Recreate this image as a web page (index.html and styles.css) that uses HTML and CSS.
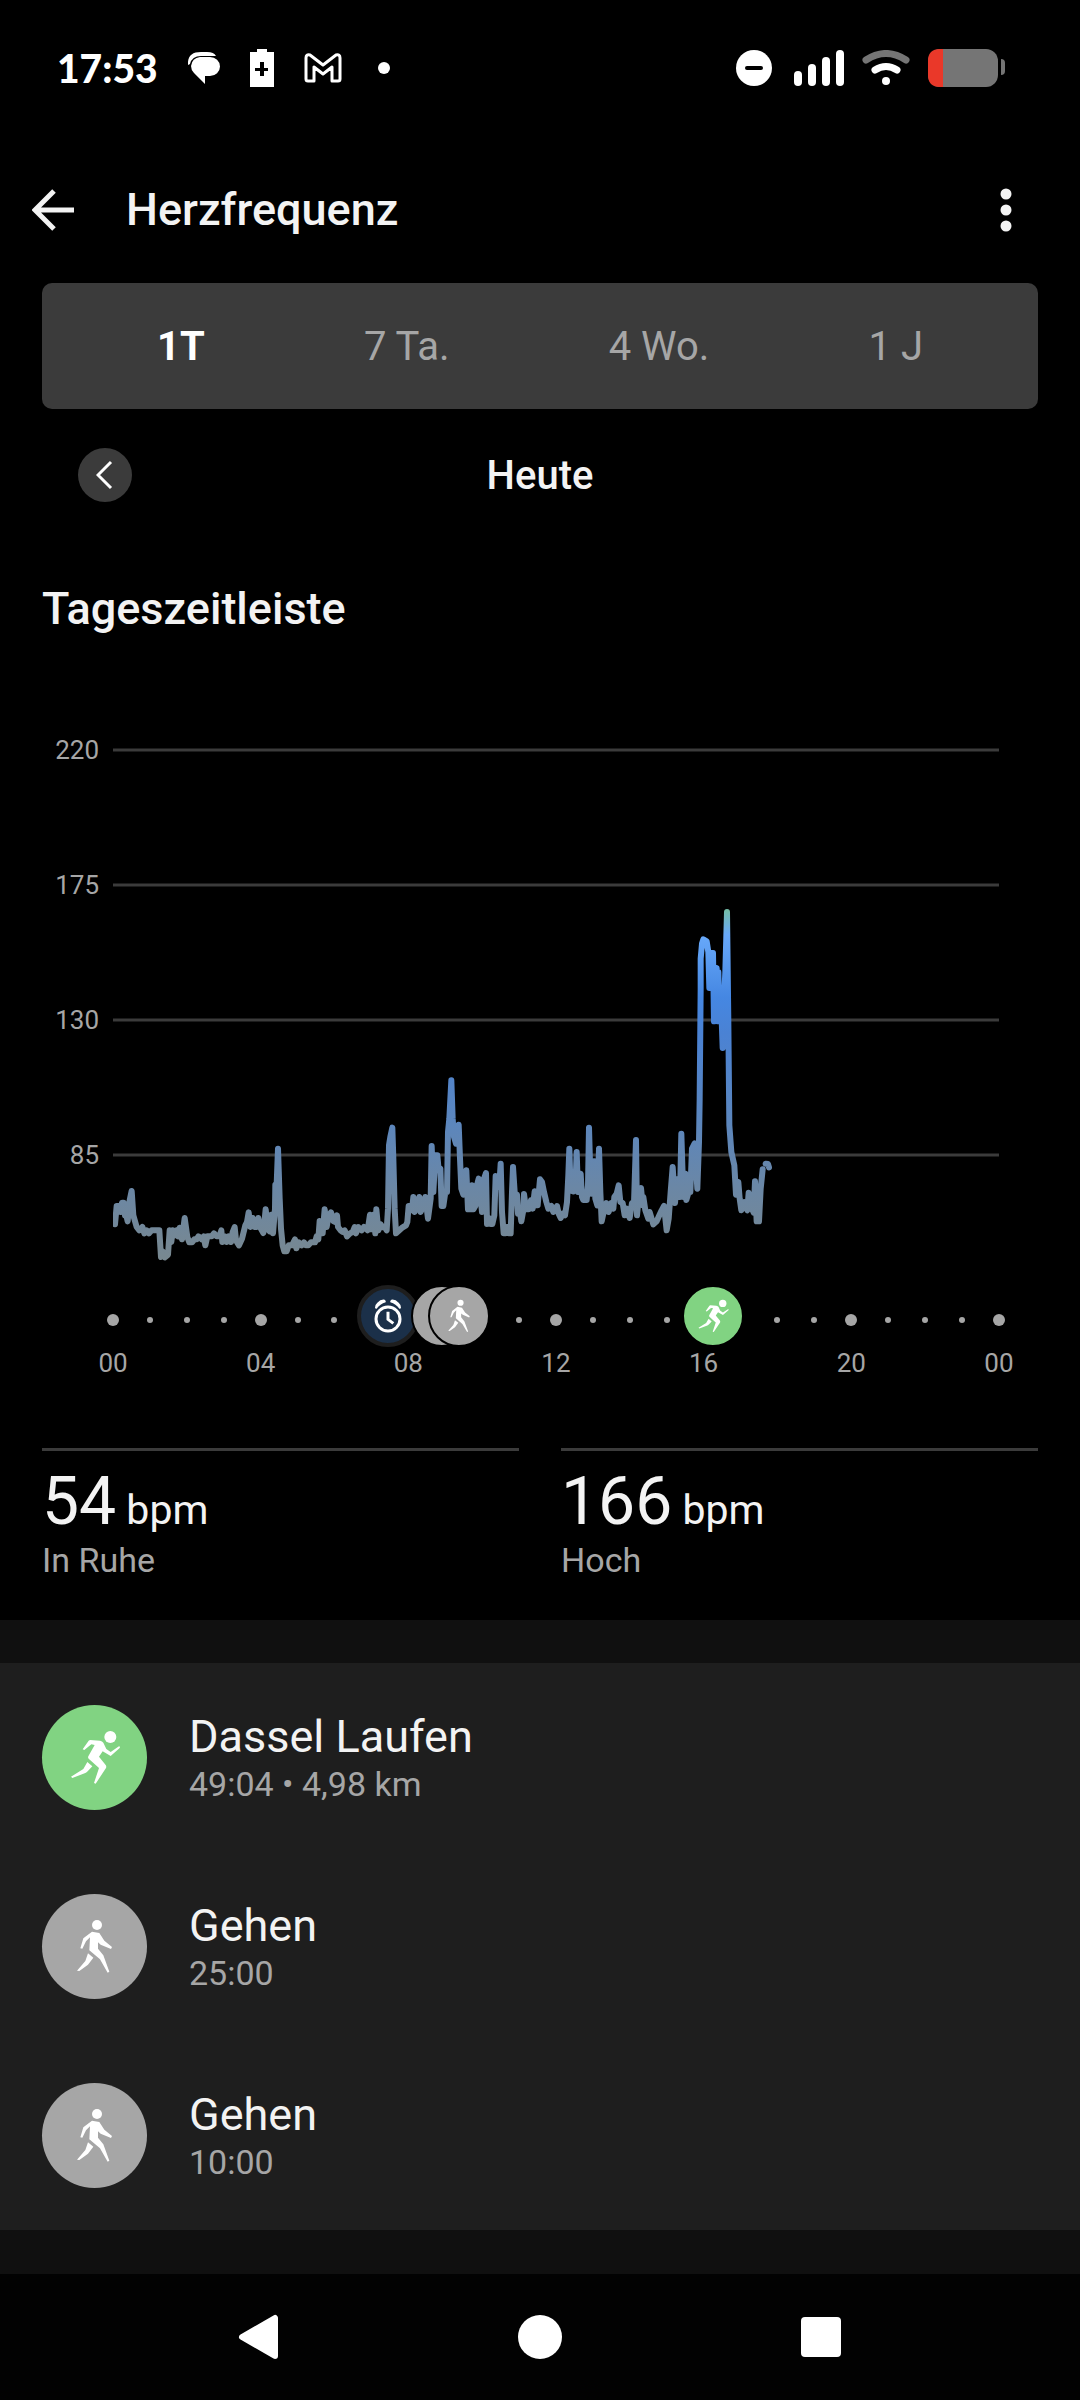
FILE: index.html
```html
<!DOCTYPE html>
<html lang="de">
  <head>
    <meta charset="utf-8">
    <meta name="viewport" content="width=device-width, initial-scale=1.0">

    <title>Herzfrequenz</title>

    <link rel="stylesheet" href="styles.css">
  </head>

  <body>
    <!-- Shared activity icons -->
    <svg class="hidden" aria-hidden="true">
      <symbol id="run" viewBox="60 60 195 195">
        <circle cx="205" cy="96" r="18"/>
        <path d="M144 105L174 107Q181 108 184 113L193 132L206 141L232 123L234 128L206 153L182 139L171 155L191 180Q194 184 192 189L161 236L156 234L171 189L140 161Q137 157 139 154L158 120L148 118L127 135L122 133L140 107Z"/>
        <path d="M136 171L151 184L137 199Q134 202 130 204L91 219L87 215L124 192Z"/>
      </symbol>
      <symbol id="walk" viewBox="60 60 195 195">
        <circle cx="165" cy="93" r="15"/>
        <path d="M150 113L172 117L187 140L210 159L207 165L176 152L168 145L168 164L184 184L202 233L197 236L174 196L142 169L144 130L132 142L121 164L115 163L124 133Z"/>
        <path d="M138 178L154 191L138 212L112 231L105 230L130 201Z"/>
      </symbol>
    </svg>

    <!-- Status bar -->
    <div class="status-bar">
      <div class="status-left">
        <span class="clock">17:53</span>
        <svg class="icon-chat" viewBox="0 0 32 32" aria-hidden="true">
          <path d="M0 13Q-1 0 13 0H19Q26 0 28 4H13Q4 4 2 12Z"/>
          <path d="M12 5H22A10 9.500 0 0 1 22 24H17V32L6 21Q3 18 3 14Q4 6 12 5Z"/>
        </svg>
        <svg class="icon-charge" viewBox="0 0 24 38" aria-hidden="true">
          <path fill-rule="evenodd" d="M7 0H17V3H24V38H0V3H7ZM10 13V19H5V22H10V27H14V22H18V19H14V13Z"/>
        </svg>
        <svg class="icon-mail" viewBox="0 0 38 30" aria-hidden="true">
          <path d="M2 5Q2 1 6 2L19 12L32 2Q36 1 36 5V26Q36 28 34 28H28V14L19 21L10 14V28H4Q2 28 2 26Z"/>
        </svg>
        <span class="dot"></span>
      </div>
      <div class="status-right">
        <svg class="icon-dnd" viewBox="0 0 36 36" aria-hidden="true">
          <circle cx="18" cy="18" r="18"/>
          <path d="M11 18H25"/>
        </svg>
        <svg class="icon-signal" viewBox="0 0 50 36" aria-hidden="true">
          <rect x="0" y="21" width="8" height="15" rx="4"/>
          <rect x="14" y="14" width="8" height="22" rx="4"/>
          <rect x="28" y="7" width="8" height="29" rx="4"/>
          <rect x="42" y="0" width="8" height="36" rx="4"/>
        </svg>
        <svg class="icon-wifi" viewBox="0 0 48 36" aria-hidden="true">
          <path class="weak" d="M4 10Q24 -3 44 10"/>
          <path d="M13 20Q24 13 35 20"/>
          <circle cx="24" cy="31" r="4"/>
        </svg>
        <svg class="icon-battery" viewBox="0 0 78 38" aria-hidden="true">
          <rect class="shell" width="70" height="38" rx="12"/>
          <path class="level" d="M15 0V38H12Q0 38 0 26V12Q0 0 12 0Z"/>
          <path class="shell" d="M73 10Q77 10 77 14V22Q77 26 73 26Z"/>
        </svg>
      </div>
    </div>

    <!-- App bar -->
    <header class="app-bar">
      <button aria-label="Zurück">
        <svg class="icon-back" viewBox="0 0 42 42"><path d="M42 21H4M22 2L3 21L22 40"/></svg>
      </button>
      <h1>Herzfrequenz</h1>
      <button aria-label="Mehr">
        <svg class="icon-more" viewBox="0 0 12 44">
          <circle cx="6" cy="6" r="5.500"/>
          <circle cx="6" cy="22" r="5.500"/>
          <circle cx="6" cy="38" r="5.500"/>
        </svg>
      </button>
    </header>

    <main>
      <nav class="tabs">
        <button class="active">1T</button>
        <button>7 Ta.</button>
        <button>4 Wo.</button>
        <button>1 J</button>
      </nav>

      <div class="date-nav">
        <button class="prev" aria-label="Vorheriger Tag">
          <svg viewBox="0 0 18 30"><path d="M15 2L2 15L15 28"/></svg>
        </button>
        <span class="date">Heute</span>
      </div>

      <h2>Tageszeitleiste</h2>

      <!-- Heart rate chart, 9 units per bpm on the y axis -->
      <div class="chart">
        <div class="y-labels">
          <span>220</span>
          <span>175</span>
          <span>130</span>
          <span>85</span>
        </div>
        <svg class="plot" viewBox="39 -971 2658 1590" preserveAspectRatio="none" role="img" aria-label="Herzfrequenz heute">
          <defs>
            <linearGradient id="rate" gradientUnits="userSpaceOnUse" x1="0" y1="-445" x2="0" y2="600">
              <stop offset="0" stop-color="#74bda8"/>
              <stop offset="0.070" stop-color="#68a9fa"/>
              <stop offset="0.250" stop-color="#4587e2"/>
              <stop offset="0.350" stop-color="#4a82d4"/>
              <stop offset="0.600" stop-color="#5b86be"/>
              <stop offset="0.800" stop-color="#6b87a5"/>
              <stop offset="1" stop-color="#788890"/>
            </linearGradient>
          </defs>
          <path class="grid" d="M39 -926H2697M39 -521H2697M39 -116H2697M39 289H2697"/>
          <polyline class="rate" points="45,497 50,442 58,442 62,460 66,432 71,432 75,470 79,470 83,488 89,425 95,397 100,470 110,505 118,515 127,505 133,524 140,515 147,524 155,515 178,515 183,595 188,578 195,596 204,588 209,515 214,550 218,515 225,530 230,515 235,533 239,507 246,542 254,478 262,535 268,551 276,551 283,542 290,542 295,533 305,542 311,533 316,560 322,533 335,533 342,524 350,533 358,533 364,515 367,550 374,533 380,550 386,533 393,550 398,520 404,505 408,545 417,560 426,540 436,500 441,490 446,461 451,505 458,478 463,505 470,505 475,478 480,505 490,523 497,452 504,512 509,518 514,468 519,524 525,450 526,378 530,378 534,270 539,420 543,510 548,560 553,578 560,578 566,560 576,560 585,542 589,569 596,551 605,560 612,551 618,560 625,560 633,551 645,551 650,533 655,542 659,487 664,524 668,524 674,452 680,505 686,470 693,461 700,487 706,490 711,470 714,505 722,515 728,520 734,515 741,533 750,524 758,520 764,505 768,524 775,505 785,515 792,505 803,515 810,468 815,512 820,468 826,524 829,452 835,515 841,496 848,506 855,506 860,515 864,450 867,260 871,235 877,207 880,300 884,450 888,524 898,515 908,506 918,500 922,490 926,442 934,442 936,455 940,415 944,460 952,440 958,415 962,460 970,440 976,415 984,480 992,420 995,262 1000,400 1006,290 1012,290 1016,335 1021,330 1025,442 1030,442 1036,400 1041,400 1044,220 1048,180 1054,65 1058,180 1062,235 1068,255 1072,240 1076,198 1080,300 1084,390 1090,408 1094,380 1099,335 1104,452 1111,452 1116,380 1120,452 1126,442 1131,380 1136,360 1140,400 1146,460 1152,360 1158,343 1161,496 1167,478 1172,496 1177,496 1183,470 1187,352 1193,385 1198,380 1202,315 1206,460 1211,524 1217,524 1221,505 1226,524 1232,524 1236,400 1239,325 1244,400 1246,425 1251,408 1254,465 1260,460 1264,488 1270,455 1272,406 1278,452 1286,452 1293,425 1298,450 1304,398 1308,440 1313,440 1320,362 1326,370 1332,400 1339,430 1345,450 1354,442 1360,460 1366,455 1371,442 1376,465 1382,478 1388,465 1395,470 1401,430 1405,350 1408,270 1412,395 1420,398 1426,390 1430,280 1434,400 1442,345 1446,415 1450,424 1460,424 1464,380 1467,207 1471,350 1474,405 1482,308 1486,420 1492,440 1497,270 1501,400 1505,488 1512,455 1519,433 1526,460 1534,433 1540,450 1543,415 1550,405 1556,380 1561,430 1568,433 1574,470 1580,450 1589,478 1596,433 1602,433 1608,244 1611,470 1618,400 1623,388 1628,440 1630,415 1636,455 1645,480 1649,460 1660,497 1670,488 1678,470 1685,455 1692,442 1700,515 1706,480 1712,400 1718,325 1725,433 1731,362 1736,415 1740,415 1744,225 1750,415 1756,345 1759,424 1766,400 1771,400 1776,270 1784,254 1792,390 1797,250 1799,120 1802,-210 1802,-300 1806,-345 1810,-358 1820,-352 1825,-320 1828,-212 1834,-317 1836,-212 1839,-317 1842,-112 1846,-260 1850,-272 1852,-112 1855,-260 1859,-112 1863,-175 1868,-32 1872,-175 1876,-260 1881,-440 1885,-110 1888,200 1894,280 1903,320 1908,408 1915,370 1919,420 1924,455 1933,430 1942,455 1946,402 1952,440 1961,462 1965,368 1970,488 1977,488 1982,390 1988,332"/>
          <polyline class="rate" points="1997,315 2004,316 2007,326"/>
        </svg>
      </div>

      <!-- Hours of the day with activities on top -->
      <div class="timeline">
        <div class="dots">
          <i></i><i></i><i></i><i></i><i></i><i></i><i></i><i></i><i></i><i></i><i></i><i></i><i></i>
          <i></i><i></i><i></i><i></i><i></i><i></i><i></i><i></i><i></i><i></i><i></i><i></i>
        </div>
        <div class="marker alarm" style="left: 31%">
          <svg viewBox="0 0 84 102" aria-hidden="true">
            <circle cx="42" cy="60" r="36"/>
            <path d="M42 38V61L58 73"/>
            <path class="bell" d="M3 26Q2 18 10 11Q20 0 32 2Q37 5 35 10Q18 15 8 29Q4 30 3 26ZM81 26Q82 18 74 11Q64 0 52 2Q47 5 49 10Q66 15 76 29Q80 30 81 26Z"/>
          </svg>
        </div>
        <div class="marker" style="left: 37.1%"></div>
        <div class="marker" style="left: 39%"><svg><use href="#walk"/></svg></div>
        <div class="marker green" style="left: 67.7%"><svg><use href="#run"/></svg></div>
      </div>
      <div class="hours">
        <span>00</span>
        <span>04</span>
        <span>08</span>
        <span>12</span>
        <span>16</span>
        <span>20</span>
        <span>00</span>
      </div>

      <div class="stats">
        <div class="stat">
          <div class="value">54<small> bpm</small></div>
          <div class="label">In Ruhe</div>
        </div>
        <div class="stat">
          <div class="value">166<small> bpm</small></div>
          <div class="label">Hoch</div>
        </div>
      </div>
    </main>

    <!-- Activities of the day -->
    <ul class="activities">
      <li>
        <div class="badge green"><svg><use href="#run"/></svg></div>
        <div>
          <div class="name">Dassel Laufen</div>
          <div class="label">49:04 • 4,98 km</div>
        </div>
      </li>
      <li>
        <div class="badge"><svg><use href="#walk"/></svg></div>
        <div>
          <div class="name">Gehen</div>
          <div class="label">25:00</div>
        </div>
      </li>
      <li>
        <div class="badge"><svg><use href="#walk"/></svg></div>
        <div>
          <div class="name">Gehen</div>
          <div class="label">10:00</div>
        </div>
      </li>
    </ul>

    <!-- System navigation -->
    <footer class="nav-bar">
      <button aria-label="Zurück">
        <svg viewBox="0 0 46 46"><path d="M6 23L39 4V42Z"/></svg>
      </button>
      <button aria-label="Startseite">
        <svg viewBox="0 0 46 46"><circle cx="23" cy="23" r="22"/></svg>
      </button>
      <button aria-label="Übersicht">
        <svg viewBox="0 0 46 46"><rect x="3" y="3" width="40" height="40" rx="4"/></svg>
      </button>
    </footer>
  </body>
</html>
```

FILE: styles.css
```css
/* Basic reset and body styling */
* {
  box-sizing: border-box;
}
body {
  margin: 0;
  font-family: Roboto, "Liberation Sans", sans-serif;
  background: #000;
  color: #f3f3f3;
  min-height: 100vh;
  display: flex;
  flex-direction: column;
}
button {
  background: none;
  border: none;
  padding: 0;
  color: inherit;
  font: inherit;
  cursor: pointer;
}
svg {
  display: block;
  flex: none;
}
.hidden {
  display: none;
}

/* Status bar */
.status-bar {
  display: flex;
  justify-content: space-between;
  align-items: center;
  height: 136px;
  padding: 0 74px 0 57px;
  color: #fff;
}
.status-bar svg {
  fill: #fff;
}
.status-left,
.status-right {
  display: flex;
  align-items: center;
}
.status-left {
  gap: 30px;
}
.status-right {
  gap: 18px;
}
.clock {
  font-family: Lato, Roboto, sans-serif;
  font-size: 39px;
  font-weight: 900;
  line-height: 48px;
}
.icon-chat {
  width: 32px;
  height: 32px;
}
.icon-charge {
  width: 24px;
  height: 38px;
}
.status-bar .icon-mail {
  width: 38px;
  height: 30px;
  fill: none;
  stroke: #fff;
  stroke-width: 3;
  stroke-linejoin: round;
}
.dot {
  width: 12px;
  height: 12px;
  margin-left: 6px;
  border-radius: 50%;
  background: #fff;
}
.icon-dnd {
  width: 36px;
  height: 36px;
  margin-right: 4px;
}
.icon-dnd path {
  stroke: #000;
  stroke-width: 4;
  stroke-linecap: round;
}
.icon-signal {
  width: 50px;
  height: 36px;
}
.icon-wifi {
  width: 48px;
  height: 36px;
}
.icon-wifi path {
  fill: none;
  stroke: #fff;
  stroke-width: 7;
  stroke-linecap: round;
}
.icon-wifi .weak {
  stroke: #757575;
}
.icon-battery {
  width: 78px;
  height: 38px;
}
.icon-battery .shell {
  fill: #757575;
}
.icon-battery .level {
  fill: #ea3829;
}

/* App bar */
.app-bar {
  display: flex;
  align-items: center;
  height: 147px;
  padding: 0 68px 0 32px;
}
h1,
h2 {
  margin: 0;
  font-size: 45px;
  font-weight: 500;
  line-height: 54px;
}
h1 {
  flex: 1;
  margin-left: 52px;
}
.icon-back {
  width: 42px;
  height: 42px;
  fill: none;
  stroke: #f3f3f3;
  stroke-width: 5;
}
.icon-more {
  width: 12px;
  height: 44px;
  fill: #f3f3f3;
}

main {
  padding: 0 42px;
}

/* Period tabs */
.tabs {
  display: flex;
  justify-content: space-between;
  height: 126px;
  padding: 0 115px;
  border-radius: 10px;
  background: #3b3b3b;
}
.tabs button {
  font-size: 40px;
  color: #a6a6a6;
}
.tabs .active {
  color: #fff;
  font-weight: 700;
}

/* Date row */
.date-nav {
  display: grid;
  grid-template-columns: 54px 1fr 54px;
  align-items: center;
  height: 132px;
  padding: 0 36px;
}
.prev {
  width: 54px;
  height: 54px;
  border-radius: 50%;
  background: #3b3b3b;
  display: grid;
  place-items: center;
}
.prev svg {
  width: 18px;
  height: 30px;
  fill: none;
  stroke: #fff;
  stroke-width: 3;
}
.date {
  text-align: center;
  font-size: 40px;
  font-weight: 500;
}
h2 {
  margin-top: 41px;
}

/* Chart */
.chart {
  display: flex;
  gap: 14px;
  margin-top: 99px;
  padding-right: 39px;
}
.y-labels {
  width: 57px;
  display: flex;
  flex-direction: column;
  gap: 105px;
  text-align: right;
}
.y-labels,
.hours {
  font-size: 26px;
  line-height: 30px;
  color: #a6a6a6;
}
.plot {
  flex: 1;
  min-width: 0;
  height: 530px;
}
.plot path,
.plot polyline {
  fill: none;
  vector-effect: non-scaling-stroke;
}
.plot .grid {
  stroke: #3b3b3b;
  stroke-width: 3;
}
.plot .rate {
  stroke: url(#rate);
  stroke-width: 6;
  stroke-linecap: round;
  stroke-linejoin: round;
}

/* Timeline */
.timeline {
  position: relative;
  height: 60px;
  margin: 20px 39px 0 71px;
}
.dots {
  display: flex;
  justify-content: space-between;
  align-items: center;
  height: 70px;
  margin: 0 -6px;
}
.dots i {
  width: 12px;
  display: grid;
  place-items: center;
}
.dots i::before {
  content: "";
  width: 6px;
  height: 6px;
  border-radius: 50%;
  background: #a6a6a6;
}
.dots i:nth-child(4n + 1)::before {
  width: 12px;
  height: 12px;
}
.marker {
  position: absolute;
  top: 0;
  width: 62px;
  height: 62px;
  margin-left: -31px;
  border: 2px solid #000;
  border-radius: 50%;
  background: #a6a6a6;
  display: grid;
  place-items: center;
}
.marker.green,
.badge.green {
  background: #81d382;
}
.marker svg {
  width: 40px;
  height: 40px;
  fill: #fff;
}
.marker.alarm {
  border: 4px solid #1e1e1e;
  background: #1b3049;
}
.alarm svg {
  width: 28px;
  height: 34px;
  fill: none;
  stroke: #fff;
  stroke-width: 9;
}
.alarm .bell {
  fill: #fff;
  stroke: none;
}
.hours {
  display: flex;
  justify-content: space-between;
  margin: 3px 9px 0 41px;
  text-align: center;
}
.hours span {
  width: 60px;
}

/* Resting and high values */
.stats {
  display: grid;
  grid-template-columns: 1fr 1fr;
  gap: 42px;
  margin-top: 70px;
}
.stat {
  height: 172px;
  padding-top: 21px;
  border-top: 3px solid #3b3b3b;
}
.value {
  font-size: 66px;
  line-height: 60px;
}
.value small {
  font-size: 41px;
}
.label {
  font-size: 34px;
  line-height: 41px;
  color: #a6a6a6;
}

/* Activity list */
.activities {
  margin: 0;
  padding: 0;
  list-style: none;
  background: #1e1e1e;
  border: solid #101010;
  border-width: 43px 0 44px;
}
.activities li {
  display: flex;
  align-items: center;
  gap: 42px;
  height: 189px;
  padding: 0 42px;
}
.badge {
  width: 105px;
  height: 105px;
  border-radius: 50%;
  background: #a6a6a6;
  display: grid;
  place-items: center;
}
.badge svg {
  width: 65px;
  height: 65px;
  fill: #fff;
}
.name {
  font-size: 45px;
  line-height: 54px;
}

/* System navigation */
.nav-bar {
  flex: 1;
  display: flex;
  justify-content: center;
  align-items: center;
  gap: 235px;
  min-height: 126px;
  background: #020202;
}
.nav-bar svg {
  width: 46px;
  height: 46px;
  fill: #fff;
}
.nav-bar path {
  stroke: #fff;
  stroke-width: 6;
  stroke-linejoin: round;
}
```
